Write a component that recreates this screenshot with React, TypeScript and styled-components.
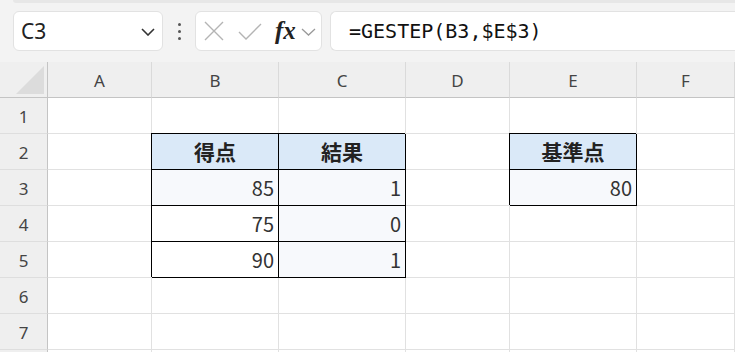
import React from 'react';
import styled, { createGlobalStyle } from 'styled-components';

const GlobalStyle = createGlobalStyle`
  html, body {
    margin: 0;
    padding: 0;
    background: #ffffff;
    overflow: hidden;
  }
  * { box-sizing: border-box; }
`;

const columns = ['A', 'B', 'C', 'D', 'E', 'F'];
const widths = [104, 127, 127, 104, 127];

type Fill = 'head' | 'light' | 'none';
type CellData = { text?: string; fill?: Fill; boxed?: boolean; bold?: boolean };

// row -> column -> cell
const sheet: Record<number, Record<string, CellData>> = {
  2: {
    B: { text: '得点', fill: 'head', boxed: true, bold: true },
    C: { text: '結果', fill: 'head', boxed: true, bold: true },
    E: { text: '基準点', fill: 'head', boxed: true, bold: true },
  },
  3: {
    B: { text: '85', fill: 'light', boxed: true },
    C: { text: '1', fill: 'light', boxed: true },
    E: { text: '80', fill: 'light', boxed: true },
  },
  4: {
    B: { text: '75', boxed: true },
    C: { text: '0', fill: 'light', boxed: true },
  },
  5: {
    B: { text: '90', boxed: true },
    C: { text: '1', fill: 'light', boxed: true },
  },
};

export default function App() {
  return (
    <Page>
      <GlobalStyle />
      <Toolbar>
        <TopStrip />
        <BarRow>
          <NameBox>
            <span>C3</span>
            <svg width="14" height="8" viewBox="0 0 14 8">
              <polyline points="1,1 7,7 13,1" fill="none" stroke="#333" strokeWidth="1.6" />
            </svg>
          </NameBox>
          <Dots>
            <i /><i /><i />
          </Dots>
          <FxBox>
            <svg width="20" height="20" viewBox="0 0 20 20">
              <path d="M1 1 L19 19 M19 1 L1 19" stroke="#b4b4b4" strokeWidth="1.4" fill="none" />
            </svg>
            <svg width="24" height="18" viewBox="0 0 24 18">
              <polyline points="1,9 8,16 23,1" fill="none" stroke="#b4b4b4" strokeWidth="1.4" />
            </svg>
            <FxLabel>fx</FxLabel>
            <svg width="15" height="8" viewBox="0 0 15 8">
              <polyline points="1,1 7.5,7 14,1" fill="none" stroke="#9a9a9a" strokeWidth="1.3" />
            </svg>
          </FxBox>
          <FormulaBox>=GESTEP(B3,$E$3)</FormulaBox>
        </BarRow>
      </Toolbar>
      <Grid $widths={widths}>
        <Corner>
          <Triangle />
        </Corner>
        {columns.map((c) => (
          <ColHead key={c}>{c}</ColHead>
        ))}
        {[1, 2, 3, 4, 5, 6, 7, 8].map((r) => (
          <React.Fragment key={r}>
            {/* row 8 only peeks in at the bottom edge, so it has no label */}
            <RowHead>{r < 8 ? r : ''}</RowHead>
            {columns.map((c) => {
              const d = sheet[r]?.[c];
              return (
                <Cell
                  key={c}
                  $fill={d?.fill ?? 'none'}
                  $boxed={!!d?.boxed}
                  $bold={!!d?.bold}
                >
                  {d?.text}
                </Cell>
              );
            })}
          </React.Fragment>
        ))}
      </Grid>
    </Page>
  );
}

const Page = styled.div`
  width: 735px;
  height: 352px;
  overflow: hidden;
  background: #fff;
`;

const Toolbar = styled.div`
  height: 62px;
  background: #f3f3f3;
  display: flex;
  flex-direction: column;
`;

const TopStrip = styled.div`
  height: 3px;
  margin-left: 13px;
  background: #e7e7e7;
  border-bottom-left-radius: 4px;
`;

const BarRow = styled.div`
  display: flex;
  align-items: center;
  padding: 8px 0 0 13px;
  height: 48px;
`;

const BoxBase = styled.div`
  height: 40px;
  background: #fff;
  border: 1px solid #e2e2e2;
  border-radius: 6px;
  display: flex;
  align-items: center;
`;

const NameBox = styled(BoxBase)`
  width: 150px;
  padding: 0 7px 0 7px;
  justify-content: space-between;
  font-family: 'Noto Sans', 'Open Sans', sans-serif;
  font-size: 21px;
  color: #222;

  svg { margin-top: 2px; }
`;

const Dots = styled.div`
  width: 32px;
  display: flex;
  flex-direction: column;
  align-items: center;
  gap: 4px;

  i {
    width: 3px;
    height: 3px;
    border-radius: 50%;
    background: #555;
  }
`;

const FxBox = styled(BoxBase)`
  width: 127px;
  padding: 0 0 0 8px;
  gap: 0;

  svg:nth-child(1) { margin-right: 14px; }
  svg:nth-child(2) { margin-right: 13px; margin-top: 1px; }
  svg:nth-child(4) { margin-left: 5px; margin-top: 2px; }
`;

const FxLabel = styled.span`
  font-family: 'Liberation Serif', serif;
  font-style: italic;
  font-weight: bold;
  font-size: 25px;
  color: #222;
  line-height: 1;
  margin-top: -2px;
`;

const FormulaBox = styled(BoxBase)`
  flex: 1;
  margin-left: 8px;
  border-right: none;
  border-top-right-radius: 0;
  border-bottom-right-radius: 0;
  padding-left: 18px;
  font-family: 'DejaVu Sans Mono', 'Liberation Mono', monospace;
  font-size: 20px;
  color: #111;
`;

const Grid = styled.div<{ $widths: number[] }>`
  display: grid;
  grid-template-columns: 48px ${(p) => p.$widths.map((w) => `${w}px`).join(' ')} 1fr;
  grid-auto-rows: 36px;
`;

const HeadBase = styled.div`
  background: #efefef;
  font-family: 'Noto Sans', 'Open Sans', sans-serif;
  font-size: 17px;
  color: #444;
  display: flex;
  align-items: center;
  justify-content: center;
`;

const Corner = styled(HeadBase)`
  border-right: 1px solid #c4c4c4;
  border-bottom: 1px solid #c4c4c4;
  align-items: flex-end;
  justify-content: flex-end;
  padding: 0 3px 3px 0;
`;

const Triangle = styled.div`
  width: 28px;
  height: 28px;
  background: #dcdcdc;
  clip-path: polygon(100% 0, 100% 100%, 0 100%);
`;

const ColHead = styled(HeadBase)`
  border-right: 1px solid #dadada;
  border-bottom: 1px solid #c4c4c4;
  padding-top: 1px;
`;

const RowHead = styled(HeadBase)`
  border-right: 1px solid #c4c4c4;
  border-bottom: 1px solid #dedede;
  padding-top: 1px;
`;

const fills: Record<Fill, string> = {
  head: '#dae9f8',
  light: '#f7f9fc',
  none: '#ffffff',
};

const Cell = styled.div<{ $fill: Fill; $boxed: boolean; $bold: boolean }>`
  background: ${(p) => fills[p.$fill]};
  border-right: 1px solid ${(p) => (p.$boxed ? '#000' : '#e1e1e1')};
  border-bottom: 1px solid ${(p) => (p.$boxed ? '#000' : '#e1e1e1')};
  box-shadow: ${(p) => (p.$boxed ? '-1px -1px 0 #000' : 'none')};
  font-family: 'Noto Sans CJK JP', 'Noto Sans', sans-serif;
  font-size: ${(p) => (p.$bold ? '21px' : '20px')};
  font-weight: ${(p) => (p.$bold ? 700 : 400)};
  color: ${(p) => (p.$bold ? '#222' : '#333')};
  display: flex;
  align-items: center;
  justify-content: ${(p) => (p.$bold ? 'center' : 'flex-end')};
  padding: 0 4px 0 4px;
  line-height: 1;
`;
